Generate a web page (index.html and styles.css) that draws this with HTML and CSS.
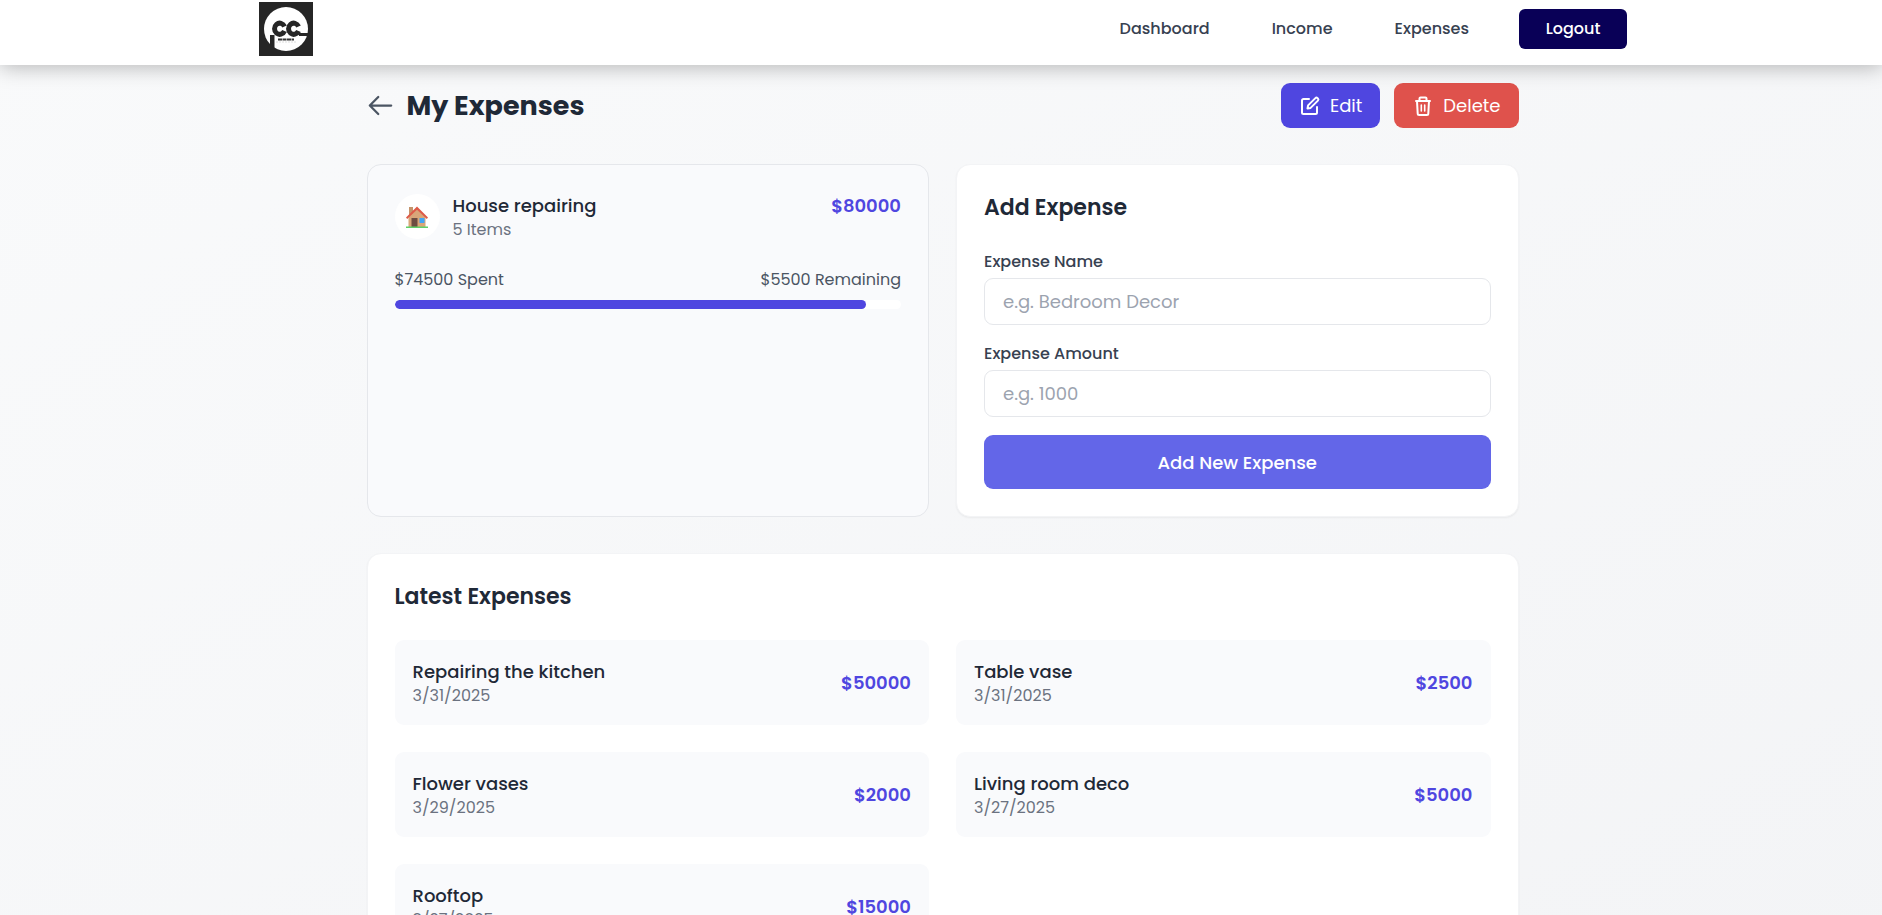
FILE: index.html
```
<!DOCTYPE html>
<html lang="en">
<head>
<meta charset="utf-8">
<meta name="viewport" content="width=device-width, initial-scale=1">
<title>My Expenses</title>
<link rel="stylesheet" href="styles.css">
</head>
<body>
<header class="navbar">
  <div class="navbar-inner">
    <a class="logo" href="#" aria-label="Home">
      <svg viewBox="0 0 54 54" width="54" height="54">
        <rect width="54" height="54" fill="#262626"/>
        <circle cx="27" cy="27" r="22" fill="#fff"/>
        <path d="M40 31h14v3H40z" fill="#262626"/>
        <path d="M11 33h4.500v16H11z" fill="#262626"/>
        <g fill="none" stroke="#262626" stroke-width="5">
          <path d="M25.500 24.500a5.200 5.600 0 1 0 0 4.500"/>
          <path d="M39.500 24.500a5.200 5.600 0 1 0 0 4.500"/>
        </g>
        <path d="M19 37.500h16" stroke="#333" stroke-width="2" stroke-dasharray="4 0.500"/>
        <path d="M17 40h21" stroke="#ddd" stroke-width="1" stroke-dasharray="2 1"/>
      </svg>
    </a>
    <nav class="nav-links">
      <a href="#">Dashboard</a>
      <a href="#">Income</a>
      <a href="#">Expenses</a>
    </nav>
    <button class="logout" type="button">Logout</button>
  </div>
</header>
<main class="page">
  <div class="page-head">
    <button class="back" type="button" aria-label="Back">
      <svg viewBox="0 0 24 24" width="27" height="27" fill="none" stroke="currentColor" stroke-width="2" stroke-linecap="round" stroke-linejoin="round"><path d="M21.500 12H2.500M10 4.500 2.500 12l7.500 7.500"/></svg>
    </button>
    <h1>My Expenses</h1>
    <div class="actions">
      <button class="btn btn-edit" type="button">
        <svg viewBox="0 0 22 22" width="22" height="22" fill="none" stroke="currentColor" stroke-width="2" stroke-linecap="round" stroke-linejoin="round"><path d="M10 4H4.500A1.500 1.500 0 0 0 3 5.500v12A1.500 1.500 0 0 0 4.500 19h12a1.500 1.500 0 0 0 1.500-1.500V12"/><path d="M8.500 13.500l.600-3.100 7.300-7.300a1.500 1.500 0 0 1 2.100 0l.400.400a1.500 1.500 0 0 1 0 2.100l-7.300 7.300z"/></svg>
        Edit
      </button>
      <button class="btn btn-delete" type="button">
        <svg viewBox="0 0 22 22" width="22" height="22" fill="none" stroke="currentColor" stroke-width="2" stroke-linecap="round" stroke-linejoin="round"><path d="M4 6h14M7.500 6V3.500a1 1 0 0 1 1-1h5a1 1 0 0 1 1 1V6M5 6l.700 12.500a1.500 1.500 0 0 0 1.500 1.500h7.600a1.500 1.500 0 0 0 1.500-1.500L17 6"/><path d="M9.300 10v6M12.700 10v6" stroke-width="1.600"/></svg>
        Delete
      </button>
    </div>
  </div>

  <div class="top-grid">
    <section class="card summary">
      <div class="summary-head">
        <span class="emoji">
          <svg viewBox="0 0 24 24" width="24" height="24"><path d="M4 2h4v8H4z" fill="#c4936a"/><path d="M12 4 3.500 12v10h17V12z" fill="#d9a679"/><path d="M1 12.500 12 1.500l11 11-1.200 1.500L12 4.700 2.200 14z" fill="#dd5a48"/><path d="M6.500 13h6v9h-6z" fill="#6d4c41"/><path d="M14.500 13h5v5h-5z" fill="#42a5f5"/><path d="M1 21.500h22V23H1z" fill="#5fd068"/></svg>
        </span>
        <div class="info">
          <h2 class="name">House repairing</h2>
          <p class="meta">5 Items</p>
        </div>
        <span class="amount">$80000</span>
      </div>
      <div class="stats"><span>$74500 Spent</span><span>$5500 Remaining</span></div>
      <div class="bar"><div class="bar-fill" style="width: 93.125%"></div></div>
    </section>

    <section class="card">
      <h2 class="card-title">Add Expense</h2>
      <form class="form">
        <div class="field">
          <label for="name">Expense Name</label>
          <input id="name" type="text" placeholder="e.g. Bedroom Decor">
        </div>
        <div class="field">
          <label for="amount">Expense Amount</label>
          <input id="amount" type="text" placeholder="e.g. 1000">
        </div>
        <button class="submit" type="button">Add New Expense</button>
      </form>
    </section>
  </div>

  <section class="card">
    <h2 class="card-title">Latest Expenses</h2>
    <div class="items">
      <article class="item"><div class="info"><h3 class="name">Repairing the kitchen</h3><p class="meta">3/31/2025</p></div><span class="amount">$50000</span></article>
      <article class="item"><div class="info"><h3 class="name">Table vase</h3><p class="meta">3/31/2025</p></div><span class="amount">$2500</span></article>
      <article class="item"><div class="info"><h3 class="name">Flower vases</h3><p class="meta">3/29/2025</p></div><span class="amount">$2000</span></article>
      <article class="item"><div class="info"><h3 class="name">Living room deco</h3><p class="meta">3/27/2025</p></div><span class="amount">$5000</span></article>
      <article class="item"><div class="info"><h3 class="name">Rooftop</h3><p class="meta">3/27/2025</p></div><span class="amount">$15000</span></article>
    </div>
  </section>
</main>
</body>
</html>
```
FILE: styles.css
```
* { box-sizing: border-box; margin: 0; padding: 0; }
body {
  font-family: Poppins, Inter, "Open Sans", sans-serif;
  font-size: 18px;
  line-height: 27px;
  color: #1f2937;
  min-height: 100vh;
  background: linear-gradient(to bottom right, #f9fafb, #f3f4f6);
}
button, input { font: inherit; border: 0; }
button { cursor: pointer; }
svg { display: block; flex: none; }

.navbar {
  position: relative;
  padding-left: 4px;
  background: #fff;
  box-shadow: 0 2px 20px rgba(0, 0, 0, 0.28);
}
.navbar-inner {
  display: flex;
  align-items: center;
  max-width: 1440px;
  margin: 0 auto;
  padding: 2px 36px 9px;
}
.nav-links { display: flex; gap: 62px; margin-left: auto; margin-right: 50px; }
.nav-links a { color: #374151; font-size: 16px; line-height: 24px; font-weight: 500; text-decoration: none; }
.logout {
  width: 108px;
  height: 40px;
  border-radius: 6px;
  background: #090057;
  color: #fff;
  font-size: 16px;
  line-height: 24px;
  font-weight: 500;
}

.page { max-width: 1155px; margin: 0 auto; padding: 18px 0 36px 3px; }
.page-head { display: flex; align-items: center; gap: 13px; margin-bottom: 36px; }
.back { background: none; color: #4b5563; }
h1 { font-size: 27px; line-height: 36px; font-weight: 700; }
.actions { display: flex; gap: 14px; margin-left: auto; }
.btn {
  display: flex;
  align-items: center;
  gap: 9px;
  height: 45px;
  padding: 0 18px;
  border-radius: 9px;
  color: #fff;
}
.btn-edit { background: #4f46e0; }
.btn-delete { background: #df524c; }

.top-grid { display: grid; grid-template-columns: 1fr 1fr; gap: 27px; margin-bottom: 36px; }
.card {
  padding: 27px;
  border: 1px solid #f3f4f6;
  border-radius: 14px;
  background: #fff;
  box-shadow: 0 1px 2px rgba(0, 0, 0, 0.05);
}
.summary { border-color: #e5e7eb; background: #f9fafc; box-shadow: none; }
.summary-head { display: flex; align-items: flex-start; gap: 13px; margin-bottom: 27px; }
.emoji {
  display: grid;
  place-items: center;
  width: 45px;
  height: 45px;
  margin-top: 2px;
  border-radius: 50%;
  background: #fff;
}
.name { font-size: 18px; line-height: 27px; font-weight: 500; }
.meta { color: #6b7280; font-size: 16px; line-height: 22px; }
.amount { margin-left: auto; color: #4f46e0; font-weight: 600; }
.stats { display: flex; justify-content: space-between; color: #4b5563; font-size: 16px; line-height: 23px; margin-bottom: 9px; }
.bar { height: 9px; border-radius: 9px; background: #fff; overflow: hidden; }
.bar-fill { height: 9px; border-radius: 9px; background: #4f46e0; }

.card-title { font-size: 22px; line-height: 32px; font-weight: 600; margin-bottom: 27px; }
.form { display: grid; gap: 18px; }
.field { display: grid; gap: 5px; }
label { color: #374151; font-size: 16px; line-height: 22px; font-weight: 500; }
input {
  width: 100%;
  height: 47px;
  padding: 0 18px;
  border: 1px solid #e5e7eb;
  border-radius: 9px;
  background: #fff;
}
input::placeholder { color: #9ca3af; }
.submit { height: 54px; border-radius: 9px; background: #6366e8; color: #fff; font-weight: 500; }

.items { display: grid; grid-template-columns: 1fr 1fr; gap: 27px; }
.item {
  display: flex;
  align-items: center;
  padding: 18px;
  border-radius: 9px;
  background: #f9fafc;
}
```
